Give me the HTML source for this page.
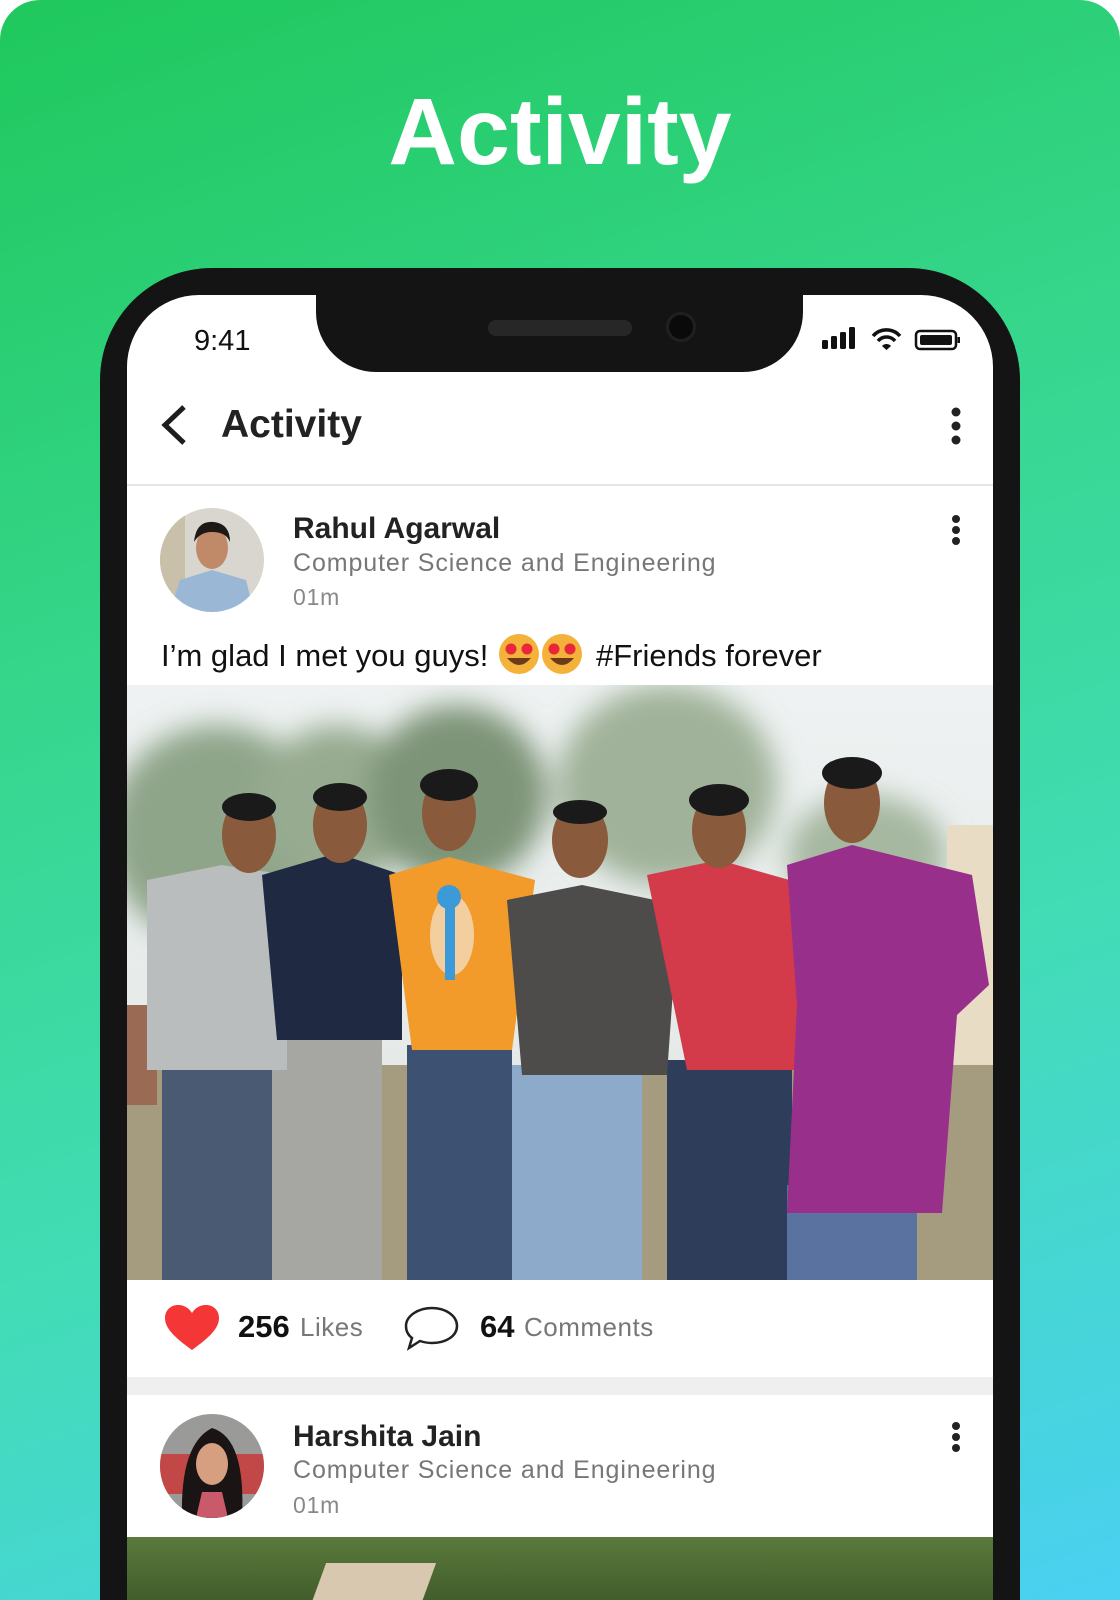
<!DOCTYPE html>
<html><head><meta charset="utf-8">
<style>
*{margin:0;padding:0;box-sizing:border-box}
html,body{width:1120px;height:1600px;overflow:hidden}
body{background:#fff;font-family:"Liberation Sans",sans-serif;position:relative}
.bg{position:absolute;left:0;top:0;width:1120px;height:1600px;border-radius:40px 40px 0 0;background:linear-gradient(160deg,#1fc85c 0%,#36d68c 35%,#42dcb6 65%,#4ad0f2 100%);overflow:hidden}
.title{position:absolute;left:0;width:1120px;top:78px;text-align:center;color:#fff;font-weight:bold;font-size:95px;letter-spacing:0px}
.phone{position:absolute;left:100px;top:268px;width:920px;height:1450px;background:#141414;border-radius:112px}
.screen{position:absolute;left:127px;top:295px;width:866px;height:1305px;background:#fff;border-radius:72px 72px 0 0;overflow:hidden}
.notch{position:absolute;left:316px;top:280px;width:487px;height:92px;background:#141414;border-radius:0 0 60px 60px}
.abs{position:absolute}
.t{position:absolute;white-space:nowrap}
</style></head><body>
<div class="bg">
<div class="title">Activity</div>
<div class="phone"></div>
<div class="screen">
 <div class="abs" style="left:0;top:189px;width:866px;height:2px;background:#e6e6e6"></div>
 <div class="abs" style="left:0;top:1082px;width:866px;height:18px;background:#efefef"></div>
 <svg class="abs" style="left:0;top:390px" width="866" height="595" viewBox="0 0 866 595">
  <defs><linearGradient id="sky" x1="0" y1="0" x2="0" y2="1"><stop offset="0" stop-color="#eef2f2"/><stop offset="1" stop-color="#e0e6e4"/></linearGradient>
  <filter id="bl"><feGaussianBlur stdDeviation="14"/></filter></defs>
  <rect width="866" height="595" fill="url(#sky)"/>
  <g filter="url(#bl)">
  <ellipse cx="90" cy="150" rx="110" ry="110" fill="#8fa58a"/>
  <ellipse cx="210" cy="120" rx="80" ry="80" fill="#97ab90"/>
  <ellipse cx="330" cy="110" rx="90" ry="90" fill="#7e9478"/>
  <ellipse cx="540" cy="100" rx="110" ry="100" fill="#a0b29a"/>
  <ellipse cx="740" cy="170" rx="80" ry="60" fill="#a6b8a0"/>
  </g>
  <rect x="820" y="140" width="46" height="300" fill="#e8dcc4"/>
  <rect x="0" y="380" width="866" height="215" fill="#a59c7f"/>
  <rect x="0" y="320" width="30" height="100" fill="#9a6a55"/>
  <rect x="35" y="380" width="120" height="215" fill="#4a5a72"/>
  <rect x="145" y="350" width="110" height="245" fill="#a6a6a2"/>
  <rect x="280" y="360" width="105" height="235" fill="#3d5272"/>
  <rect x="385" y="380" width="130" height="215" fill="#8eaacb"/>
  <rect x="540" y="375" width="125" height="220" fill="#2d3d5a"/>
  <rect x="660" y="500" width="130" height="95" fill="#5a72a0"/>
  <path d="M20 195 L95 180 L160 190 L160 385 L20 385Z" fill="#b9bdbd"/>
  <path d="M135 190 L210 168 L275 190 L275 355 L150 355Z" fill="#1f2a42"/>
  <path d="M262 190 L322 172 L408 195 L385 365 L285 365Z" fill="#f29a2a"/>
  <path d="M380 215 L455 200 L552 220 L540 390 L395 390Z" fill="#4e4c4a"/>
  <path d="M520 190 L592 175 L680 200 L670 385 L560 385Z" fill="#d33a4a"/>
  <path d="M660 180 L725 160 L845 190 L862 300 L830 330 L815 528 L660 528 L670 320Z" fill="#982f8a"/>
  <ellipse cx="325" cy="250" rx="22" ry="40" fill="#f3cfa0"/>
  <rect x="318" y="215" width="10" height="80" fill="#3c9ad8"/>
  <circle cx="322" cy="212" r="12" fill="#3c9ad8"/>
  <g fill="#8a5a3c">
   <ellipse cx="122" cy="150" rx="27" ry="38"/><ellipse cx="213" cy="140" rx="27" ry="38"/>
   <ellipse cx="322" cy="128" rx="27" ry="38"/><ellipse cx="453" cy="155" rx="28" ry="38"/>
   <ellipse cx="592" cy="145" rx="27" ry="38"/><ellipse cx="725" cy="118" rx="28" ry="40"/>
  </g>
  <g fill="#1a1a1a">
   <ellipse cx="122" cy="122" rx="27" ry="14"/><ellipse cx="213" cy="112" rx="27" ry="14"/>
   <ellipse cx="322" cy="100" rx="29" ry="16"/><ellipse cx="453" cy="127" rx="27" ry="12"/>
   <ellipse cx="592" cy="115" rx="30" ry="16"/><ellipse cx="725" cy="88" rx="30" ry="16"/>
  </g>
 </svg>
 <div class="abs" style="left:0;top:1242px;width:866px;height:70px;background:linear-gradient(180deg,#5a7a3c,#3f5a2a)"></div>
 <div class="abs" style="left:190px;top:1268px;width:110px;height:50px;background:#d8c8b0;transform:skew(-20deg)"></div>
</div>
<div class="notch"></div>
<div class="abs" style="left:488px;top:320px;width:144px;height:16px;border-radius:8px;background:#272727"></div>
<div class="abs" style="left:666px;top:312px;width:30px;height:30px;border-radius:50%;background:#0a0a0a;border:3px solid #202020"></div>

<div class="t" style="left:194px;top:325px;font-size:29px;color:#111">9:41</div>
<svg class="abs" style="left:820px;top:325px" width="140" height="28" viewBox="0 0 140 28">
 <rect x="2" y="15" width="6" height="9" rx="1.5" fill="#111"/><rect x="11" y="11" width="6" height="13" rx="1.5" fill="#111"/>
 <rect x="20" y="7" width="6" height="17" rx="1.5" fill="#111"/><rect x="29" y="2" width="6" height="22" rx="1.5" fill="#111"/>
 <path d="M53 11 A18 18 0 0 1 80 11" stroke="#111" stroke-width="3.5" fill="none"/>
 <path d="M58 16 A11 11 0 0 1 75 16" stroke="#111" stroke-width="3.5" fill="none"/>
 <path d="M62 21 L66.5 25 L71 21 A6 6 0 0 0 62 21Z" fill="#111"/>
 <rect x="96" y="6" width="40" height="18" rx="4" fill="none" stroke="#111" stroke-width="2.5"/>
 <rect x="100" y="10" width="32" height="10" rx="2" fill="#111"/>
 <rect x="137.5" y="12" width="2.5" height="6" fill="#111"/>
</svg>

<svg class="abs" style="left:158px;top:404px" width="32" height="42"><path d="M26 3 L7 21 L26 39" stroke="#1e1e1e" stroke-width="5" fill="none"/></svg>
<div class="t" style="left:221px;top:403px;font-size:39px;font-weight:bold;color:#222">Activity</div>
<svg class="abs" style="left:948px;top:406px" width="16" height="40"><circle cx="8" cy="6" r="4.5" fill="#222"/><circle cx="8" cy="20" r="4.5" fill="#222"/><circle cx="8" cy="34" r="4.5" fill="#222"/></svg>

<svg class="abs" style="left:160px;top:508px" width="104" height="104" viewBox="0 0 104 104">
 <defs><clipPath id="c1"><circle cx="52" cy="52" r="52"/></clipPath></defs>
 <g clip-path="url(#c1)">
  <rect width="104" height="104" fill="#d8d6ce"/>
  <rect x="0" y="0" width="25" height="104" fill="#c8c0a8"/>
  <path d="M10 104 L20 72 L52 62 L86 72 L94 104Z" fill="#9ab8d6"/>
  <ellipse cx="52" cy="40" rx="16" ry="21" fill="#c08a68"/>
  <path d="M34 34 Q36 12 54 14 Q70 16 70 34 Q66 24 52 24 Q40 24 34 34Z" fill="#1e1816"/>
 </g>
</svg>
<div class="t" style="left:293px;top:512px;font-size:30px;font-weight:bold;color:#222">Rahul Agarwal</div>
<div class="t" style="left:293px;top:549px;font-size:25px;color:#777;letter-spacing:0.9px">Computer Science and Engineering</div>
<div class="t" style="left:293px;top:584px;font-size:23px;color:#888;letter-spacing:0.8px">01m</div>
<svg class="abs" style="left:948px;top:514px" width="16" height="32"><circle cx="8" cy="5" r="4" fill="#222"/><circle cx="8" cy="16" r="4" fill="#222"/><circle cx="8" cy="27" r="4" fill="#222"/></svg>
<div class="t" style="left:161px;top:638px;font-size:31px;color:#111">I’m glad I met you guys!</div>
<svg class="abs" style="left:499px;top:632px" width="90" height="44">
 <g><circle cx="20" cy="22" r="20" fill="#f4b23a"/><circle cx="63" cy="22" r="20" fill="#f4b23a"/>
 <g fill="#e8283a"><circle cx="12" cy="17" r="5.5"/><circle cx="28" cy="17" r="5.5"/><circle cx="55" cy="17" r="5.5"/><circle cx="71" cy="17" r="5.5"/></g>
 <path d="M8 26 Q20 40 32 26Z" fill="#6b3a1a"/><path d="M51 26 Q63 40 75 26Z" fill="#6b3a1a"/></g>
</svg>
<div class="t" style="left:596px;top:638px;font-size:31px;color:#111">#Friends forever</div>

<svg class="abs" style="left:164px;top:1305px" width="56" height="46" viewBox="0 0 56 46"><path d="M28 45 C10 32 1 23 1 13 C1 5 7 0 14 0 C20 0 25 3 28 8 C31 3 36 0 42 0 C49 0 55 5 55 13 C55 23 46 32 28 45Z" fill="#f43636"/></svg>
<div class="t" style="left:238px;top:1309px;font-size:31px;font-weight:bold;color:#111">256</div>
<div class="t" style="left:300px;top:1312px;font-size:26px;color:#777;letter-spacing:0.5px">Likes</div>
<svg class="abs" style="left:404px;top:1305px" width="56" height="46" viewBox="0 0 56 46"><path d="M28 3 C42 3 53 11 53 21 C53 31 42 38 28 38 C23 38 19 37 16 36 L5 43 L8 33 C4 30 2 26 2 21 C2 11 14 3 28 3Z" fill="none" stroke="#222" stroke-width="2.5"/></svg>
<div class="t" style="left:480px;top:1309px;font-size:31px;font-weight:bold;color:#111">64</div>
<div class="t" style="left:524px;top:1312px;font-size:26px;color:#777;letter-spacing:0.5px">Comments</div>

<svg class="abs" style="left:160px;top:1414px" width="104" height="104" viewBox="0 0 104 104">
 <defs><clipPath id="c2"><circle cx="52" cy="52" r="52"/></clipPath></defs>
 <g clip-path="url(#c2)">
  <rect width="104" height="104" fill="#9a9a98"/>
  <rect x="0" y="40" width="104" height="40" fill="#c24848"/>
  <path d="M22 104 Q20 30 52 14 Q86 24 82 104Z" fill="#1a1414"/>
  <ellipse cx="52" cy="50" rx="16" ry="21" fill="#d6a080"/>
  <path d="M36 104 L42 78 L62 78 L68 104Z" fill="#c85a6a"/>
 </g>
</svg>
<div class="t" style="left:293px;top:1420px;font-size:30px;font-weight:bold;color:#222">Harshita Jain</div>
<div class="t" style="left:293px;top:1456px;font-size:25px;color:#777;letter-spacing:0.9px">Computer Science and Engineering</div>
<div class="t" style="left:293px;top:1492px;font-size:23px;color:#888;letter-spacing:0.8px">01m</div>
<svg class="abs" style="left:948px;top:1421px" width="16" height="32"><circle cx="8" cy="5" r="4" fill="#222"/><circle cx="8" cy="16" r="4" fill="#222"/><circle cx="8" cy="27" r="4" fill="#222"/></svg>
</div>
</body></html>
